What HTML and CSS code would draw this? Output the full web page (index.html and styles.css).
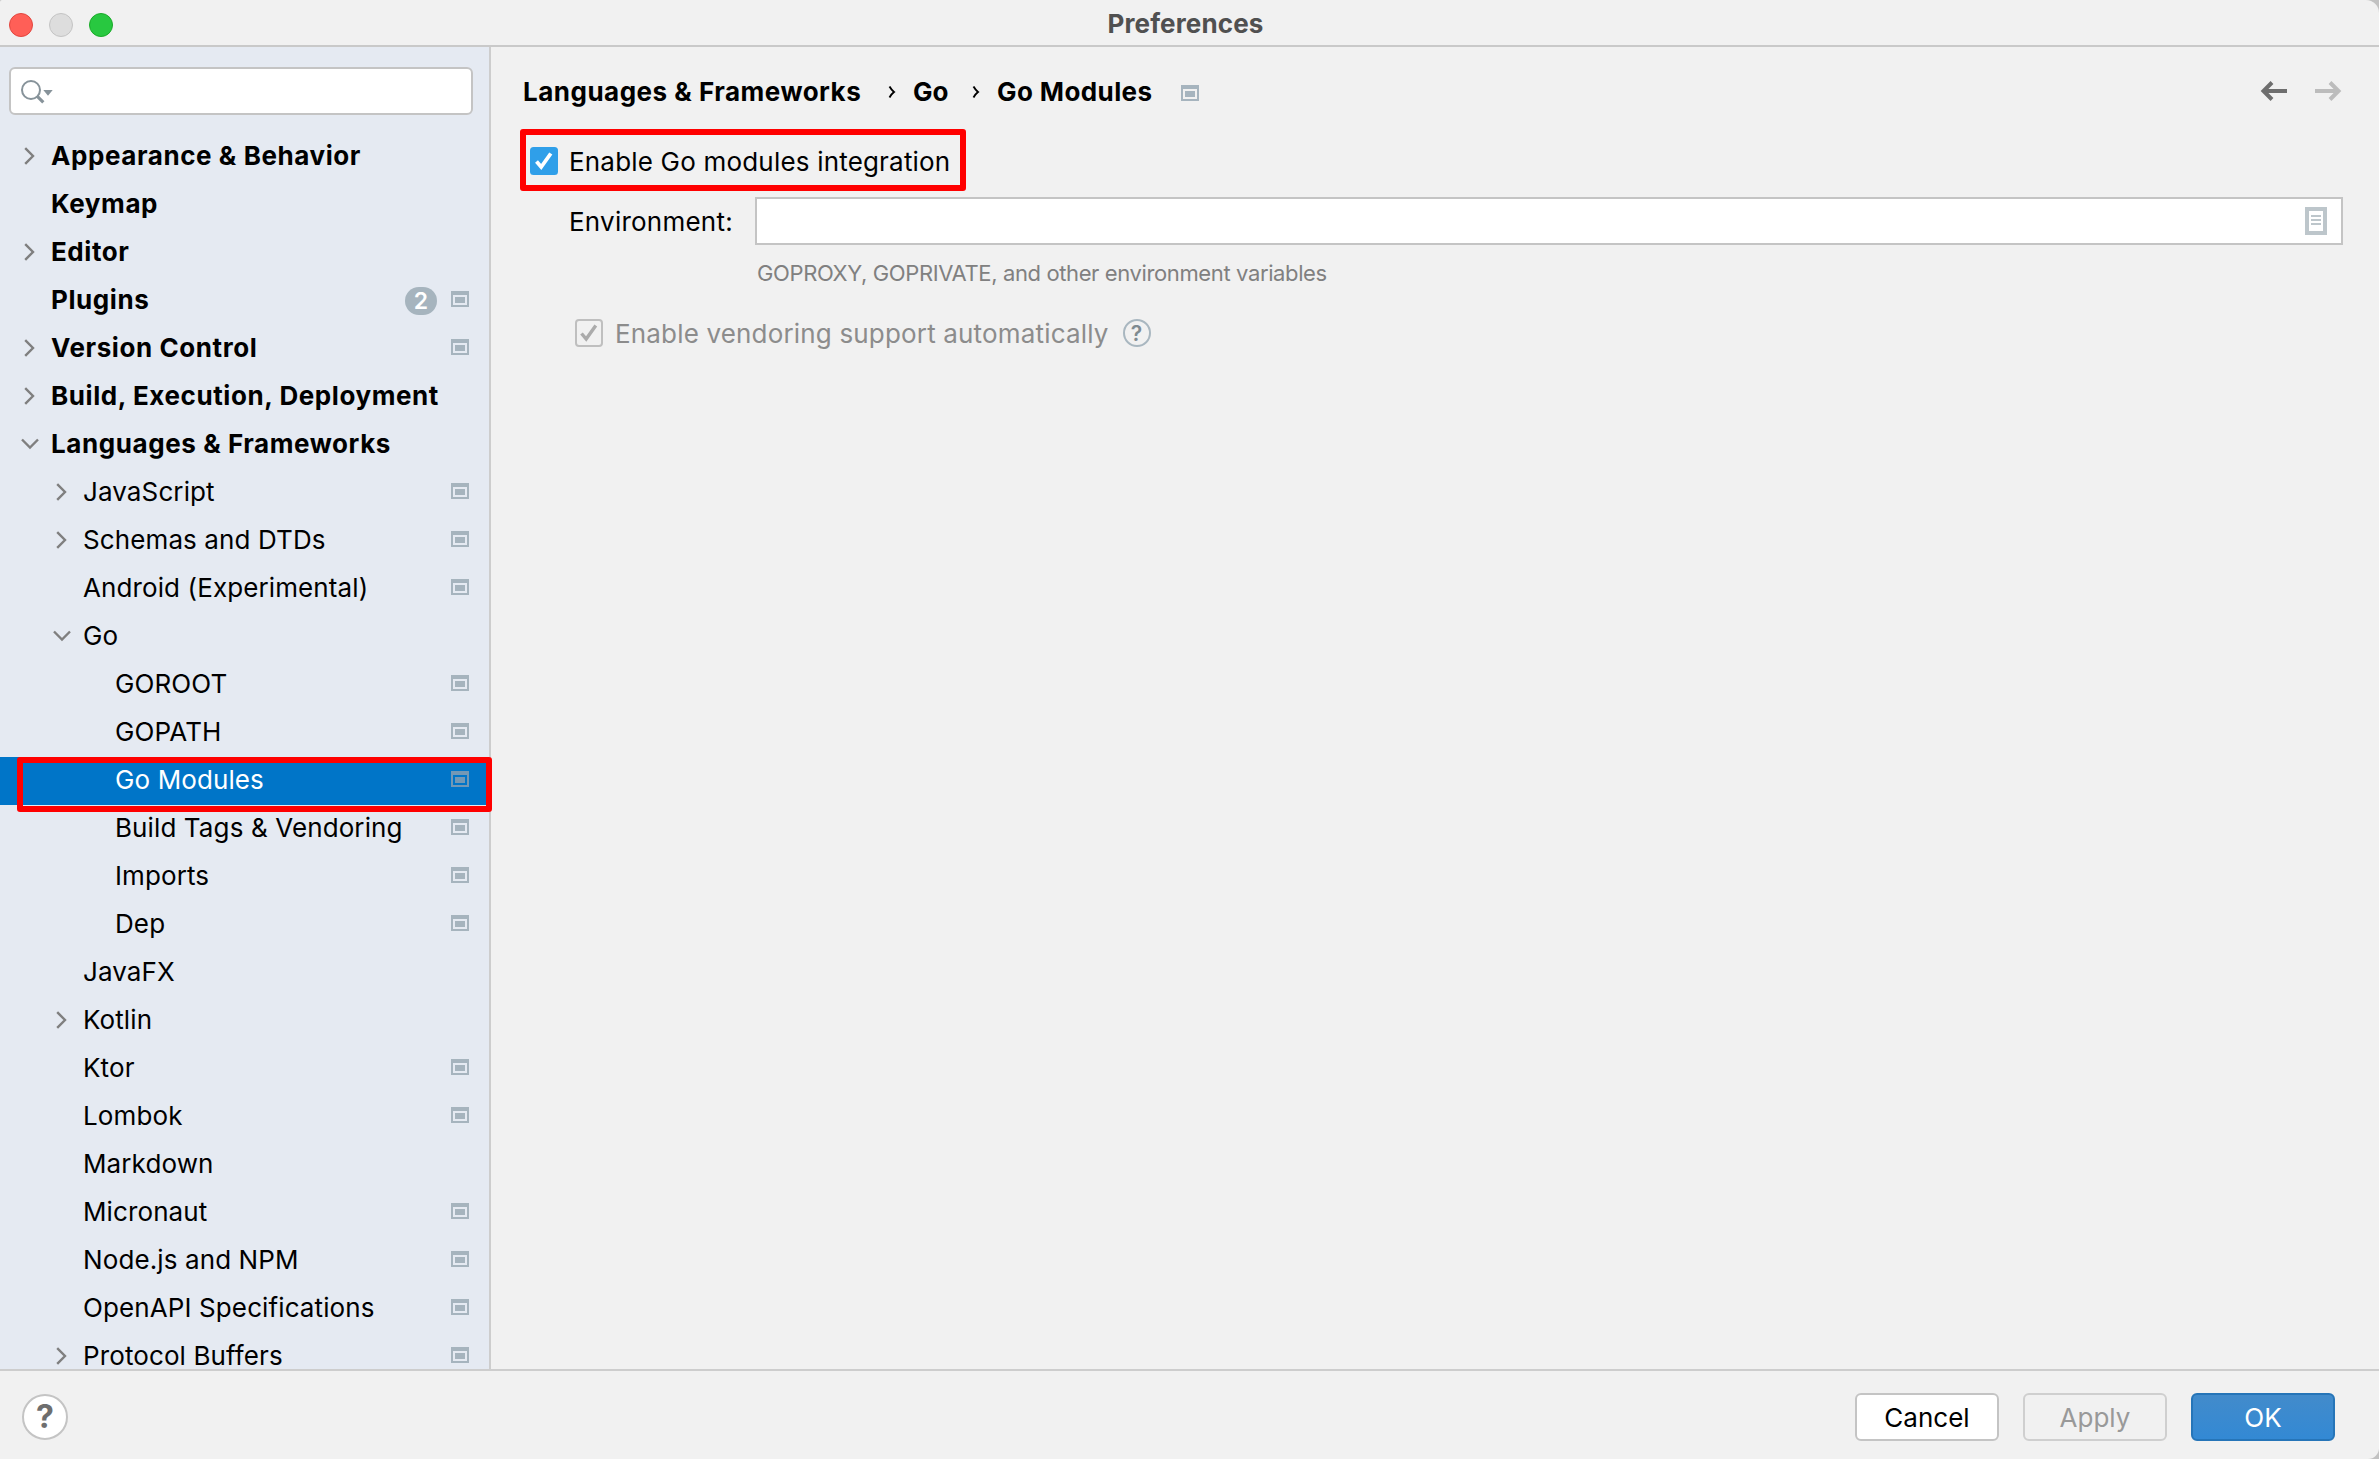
FILE: index.html
```
<!DOCTYPE html>
<html lang="en">
<head>
<meta charset="utf-8">
<title>Preferences</title>
<link rel="stylesheet" href="styles.css">
</head>
<body>
<svg class="defs" width="0" height="0">
  <symbol id="right" viewBox="0 0 20 20"><path d="M5.2 2.2 13 10 5.2 17.8" fill="none" stroke="#7f7f7f" stroke-width="2.4"/></symbol>
  <symbol id="down" viewBox="0 0 20 20"><path d="M2 5.5 10 13.5 18 5.5" fill="none" stroke="#7f7f7f" stroke-width="2.4"/></symbol>
  <symbol id="project" viewBox="0 0 18 16"><path fill-rule="evenodd" d="M0 0h18v16H0zM2 4v10h14V4z"/><path d="M4 6h10v6H4z"/></symbol>
</svg>
<div class="window">
  <header class="titlebar">
    <div class="lights"><i class="light close"></i><i class="light minimize"></i><i class="light expand"></i></div>
    <h1 class="title">Preferences</h1>
  </header>
  <div class="content">
    <aside class="sidebar">
      <div class="search">
        <svg width="36" height="28" viewBox="0 0 36 28"><circle cx="11" cy="11" r="9" fill="none" stroke="#87939a" stroke-width="2"/><path d="m17.3 17.3 6 6" stroke="#87939a" stroke-width="3.2"/><path d="M23.3 11h9.4L28 16.7z" fill="#87939a"/></svg>
      </div>
      <ul class="tree">
        <li class="row top"><svg class="arrow"><use href="#right"/></svg><span class="label">Appearance &amp; Behavior</span></li>
        <li class="row top"><span class="arrow"></span><span class="label">Keymap</span></li>
        <li class="row top"><svg class="arrow"><use href="#right"/></svg><span class="label">Editor</span></li>
        <li class="row top"><span class="arrow"></span><span class="label">Plugins</span><span class="count">2</span><svg class="project"><use href="#project"/></svg></li>
        <li class="row top"><svg class="arrow"><use href="#right"/></svg><span class="label">Version Control</span><svg class="project"><use href="#project"/></svg></li>
        <li class="row top"><svg class="arrow"><use href="#right"/></svg><span class="label">Build, Execution, Deployment</span></li>
        <li class="row top"><svg class="arrow"><use href="#down"/></svg><span class="label">Languages &amp; Frameworks</span></li>
        <li class="row second"><svg class="arrow"><use href="#right"/></svg><span class="label">JavaScript</span><svg class="project"><use href="#project"/></svg></li>
        <li class="row second"><svg class="arrow"><use href="#right"/></svg><span class="label">Schemas and DTDs</span><svg class="project"><use href="#project"/></svg></li>
        <li class="row second"><span class="arrow"></span><span class="label">Android (Experimental)</span><svg class="project"><use href="#project"/></svg></li>
        <li class="row second"><svg class="arrow"><use href="#down"/></svg><span class="label">Go</span></li>
        <li class="row third"><span class="arrow"></span><span class="label">GOROOT</span><svg class="project"><use href="#project"/></svg></li>
        <li class="row third"><span class="arrow"></span><span class="label">GOPATH</span><svg class="project"><use href="#project"/></svg></li>
        <li class="row third selected"><span class="arrow"></span><span class="label">Go Modules</span><svg class="project"><use href="#project"/></svg><span class="marker"></span></li>
        <li class="row third"><span class="arrow"></span><span class="label">Build Tags &amp; Vendoring</span><svg class="project"><use href="#project"/></svg></li>
        <li class="row third"><span class="arrow"></span><span class="label">Imports</span><svg class="project"><use href="#project"/></svg></li>
        <li class="row third"><span class="arrow"></span><span class="label">Dep</span><svg class="project"><use href="#project"/></svg></li>
        <li class="row second"><span class="arrow"></span><span class="label">JavaFX</span></li>
        <li class="row second"><svg class="arrow"><use href="#right"/></svg><span class="label">Kotlin</span></li>
        <li class="row second"><span class="arrow"></span><span class="label">Ktor</span><svg class="project"><use href="#project"/></svg></li>
        <li class="row second"><span class="arrow"></span><span class="label">Lombok</span><svg class="project"><use href="#project"/></svg></li>
        <li class="row second"><span class="arrow"></span><span class="label">Markdown</span></li>
        <li class="row second"><span class="arrow"></span><span class="label">Micronaut</span><svg class="project"><use href="#project"/></svg></li>
        <li class="row second"><span class="arrow"></span><span class="label">Node.js and NPM</span><svg class="project"><use href="#project"/></svg></li>
        <li class="row second"><span class="arrow"></span><span class="label">OpenAPI Specifications</span><svg class="project"><use href="#project"/></svg></li>
        <li class="row second"><svg class="arrow"><use href="#right"/></svg><span class="label">Protocol Buffers</span><svg class="project"><use href="#project"/></svg></li>
      </ul>
    </aside>
    <main class="page">
      <div class="crumbs">
        <span class="crumb first">Languages &amp; Frameworks</span>
        <svg class="sep" viewBox="0 0 8 14"><path d="M1.5 1.5C3 4 4 5.500 6 7 4 8.500 3 10 1.500 12.500" fill="none" stroke="#000" stroke-width="1.900"/></svg>
        <span class="crumb middle">Go</span>
        <svg class="sep" viewBox="0 0 8 14"><path d="M1.5 1.5C3 4 4 5.500 6 7 4 8.500 3 10 1.500 12.500" fill="none" stroke="#000" stroke-width="1.900"/></svg>
        <span class="crumb last">Go Modules</span>
        <svg class="project"><use href="#project"/></svg>
        <div class="history">
          <svg width="28" height="20" viewBox="0 0 28 20"><path d="M27 10H4M12 1.500 3.500 10 12 18.500" fill="none" stroke="#6e6e6e" stroke-width="4"/></svg>
          <svg width="28" height="20" viewBox="0 0 28 20"><path d="M1 10h23M16 1.500 24.500 10 16 18.500" fill="none" stroke="#bcbcbc" stroke-width="4"/></svg>
        </div>
      </div>
      <div class="option framed">
        <svg class="check" viewBox="0 0 28 28"><rect width="28" height="28" rx="3.500" fill="#2f9fe9"/><path d="m6.500 14.500 4.700 5.500L20.800 6.500" fill="none" stroke="#fff" stroke-width="3.800"/></svg>
        <span class="text">Enable Go modules integration</span>
      </div>
      <div class="field-row">
        <label class="text field-label">Environment:</label>
        <div class="field">
          <svg width="22" height="28" viewBox="0 0 22 28"><path fill="#bdc6cb" fill-rule="evenodd" d="M0 0h22v28H0zM4 4v20h14V4z"/><path fill="#bdc6cb" d="M6 8h10v2H6zM6 12h10v2H6zM6 16h10v2H6z"/></svg>
        </div>
      </div>
      <p class="hint">GOPROXY, GOPRIVATE, and other environment variables</p>
      <div class="option disabled">
        <svg class="check" viewBox="0 0 28 28"><rect x="1" y="1" width="26" height="26" rx="3" fill="none" stroke="#bfbfbf" stroke-width="2"/><path d="m6.500 14.500 4.700 5.500L20.800 6.500" fill="none" stroke="#ababab" stroke-width="3.400"/></svg>
        <span class="text">Enable vendoring support automatically</span>
        <span class="tip">?</span>
      </div>
    </main>
  </div>
  <footer class="footer">
    <button class="help">?</button>
    <div class="actions">
      <button class="button">Cancel</button>
      <button class="button off">Apply</button>
      <button class="button primary">OK</button>
    </div>
  </footer>
</div>
</body>
</html>
```
FILE: styles.css
```
* { box-sizing: border-box; }
body {
  margin: 0;
  background: #c2c2c2;
  font: 400 26px/45px Inter, "Liberation Sans", sans-serif;
  letter-spacing: .11px;
  color: #000;
}
.defs { position: absolute; }
.window {
  width: 2379px;
  height: 1459px;
  display: flex;
  flex-direction: column;
  overflow: hidden;
  background: #f1f1f1;
  border-radius: 2px 13px 11px 0;
}
.titlebar {
  flex: none;
  height: 47px;
  border-bottom: 2px solid #c9c9c9;
  display: grid;
  grid-template-columns: 1fr auto 1fr;
  align-items: start;
}
.lights { display: flex; gap: 16px; padding: 13px 0 0 9px; }
.light { width: 24px; height: 24px; border-radius: 50%; border: 1px solid; }
.close { background: #ff5f57; border-color: #e2463f; }
.minimize { background: #dddddd; border-color: #c4c4c4; }
.expand { background: #28c840; border-color: #1aab29; }
.title {
  margin: 0 10px 0 0;
  font-size: 26px;
  line-height: 47px;
  font-weight: 650;
  letter-spacing: .15px;
  color: #505050;
  transform: translateX(1px);
}

.content { flex: 1; min-height: 0; display: flex; }
.sidebar {
  position: relative;
  z-index: 1;
  flex: none;
  width: 491px;
  overflow-x: visible;
  overflow-y: clip;
  background: #e5eaf2;
  border-right: 2px solid #cdcdcd;
}
.search {
  height: 48px;
  margin: 20px 16px 18px 9px;
  padding: 10px 0 0 9px;
  background: #fff;
  border: 2px solid #c4c4c4;
  border-radius: 6px;
  line-height: 0;
}
.tree { list-style: none; margin: 0; padding: 0; }
.row {
  position: relative;
  display: flex;
  align-items: flex-start;
  height: 48px;
  padding: 0 20px 0 20px;
}
.row:last-child { height: 36px; }
.row:last-child .label { margin-top: 9px; line-height: 27px; }
.second { padding-left: 52px; }
.third { padding-left: 84px; }
.arrow { flex: none; width: 20px; height: 20px; margin: 13px 11px 0 0; }
.label { flex: 1; white-space: nowrap; }
.top { font-weight: 660; letter-spacing: .58px; }
.project { flex: none; width: 18px; height: 16px; margin-top: 14px; fill: #a6b4be; }
.count {
  width: 32px;
  height: 28px;
  margin: 10px 14px 0 0;
  border-radius: 14px;
  background: #a6b4be;
  color: #fff;
  font-size: 23px;
  font-weight: 600;
  line-height: 28px;
  letter-spacing: 0;
  text-align: center;
}
.selected { background: #0075c8; color: #fff; }
.selected .project { fill: #7398b5; }
.marker {
  position: absolute;
  left: 17px;
  top: 0;
  z-index: 2;
  width: 475px;
  height: 55px;
  border: 6px solid #f00;
  border-radius: 3px;
}

.page { flex: 1; padding: 0 36px 0 30px; }
.crumbs { display: flex; align-items: flex-start; height: 82px; padding-top: 22px; font-weight: 660; white-space: nowrap; }
.crumb { line-height: 46px; }
.first { width: 365px; padding-left: 2px; letter-spacing: .5px; }
.middle { width: 57px; }
.crumb.last { width: 162px; letter-spacing: .4px; }
.sep { flex: none; width: 8px; height: 14px; margin: 16px 0 0 2px; }
.sep + .crumb { margin-left: 17px; }
.crumbs .project { margin: 16px 0 0 22px; }
.history { display: flex; gap: 26px; margin-left: auto; padding: 12px 1px 0 0; line-height: 0; }

.option { display: flex; align-items: flex-start; }
.check { flex: none; width: 28px; height: 28px; }
.framed {
  width: 446px;
  height: 62px;
  margin-left: -1px;
  padding: 12px 0 0 3px;
  border: 6px solid #f00;
  border-radius: 3px;
}
.framed .check { margin-left: 1px; }
.framed .text { margin-left: 11px; line-height: 30px; white-space: nowrap; letter-spacing: .19px; }
.field-row { display: flex; height: 48px; margin-top: 6px; padding-left: 48px; }
.field-label { width: 186px; line-height: 50px; letter-spacing: .23px; }
.field {
  flex: 1;
  display: flex;
  justify-content: flex-end;
  padding: 8px 14px 0 0;
  background: #fff;
  border: 2px solid #c4c4c4;
}
.hint {
  margin: 12px 0 0 236px;
  font-size: 22px;
  line-height: 32px;
  letter-spacing: -.38px;
  color: #808080;
}
.disabled { margin: 30px 0 0 54px; color: #8c8c8c; }
.disabled .text { margin-left: 12px; line-height: 30px; letter-spacing: .17px; }
.tip {
  width: 28px;
  height: 28px;
  margin-left: 14px;
  border: 2px solid #a9b7c0;
  border-radius: 50%;
  color: #7f8b91;
  font-size: 21px;
  font-weight: 600;
  line-height: 25px;
  letter-spacing: 0;
  text-align: center;
}

.footer {
  flex: none;
  height: 90px;
  display: flex;
  justify-content: space-between;
  align-items: flex-start;
  padding: 22px 44px 0 22px;
  border-top: 2px solid #cdcdcd;
}
.help {
  width: 46px;
  height: 46px;
  margin-top: 1px;
  padding: 0;
  border: 2px solid #c4c4c4;
  border-radius: 50%;
  background: #fff;
  color: #6e6e6e;
  font: 700 32px/42px Inter, sans-serif;
}
.actions { display: flex; gap: 24px; }
.button {
  width: 144px;
  height: 48px;
  padding: 1px 0 0;
  border: 2px solid #c4c4c4;
  border-radius: 6px;
  background: #fff;
  color: #000;
  font: inherit;
  line-height: 44px;
  letter-spacing: 0;
}
.off { background: #f1f1f1; border-color: #cfcfcf; color: #999; }
.primary {
  color: #fff;
  border-color: #2675b8;
  background: linear-gradient(#428bcb, #3389d4);
}
```
